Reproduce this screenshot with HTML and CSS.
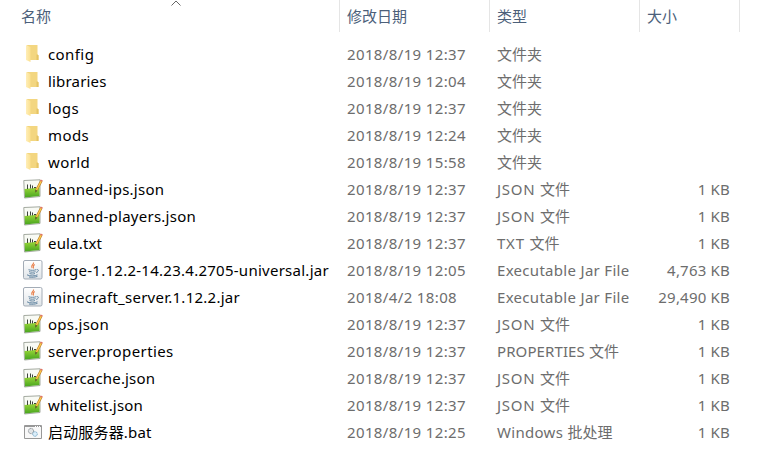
FILE: index.html
```html
<!DOCTYPE html>
<html lang="zh-CN">
<head>
<meta charset="utf-8">
<title>server</title>
<link rel="stylesheet" href="styles.css">
</head>
<body>
<svg class="sprite" width="0" height="0">
  <defs>
    <linearGradient id="gf" x1="0" x2="1"><stop offset="0" stop-color="#ffeeb8"/><stop offset="1" stop-color="#fbe08f"/></linearGradient>
    <linearGradient id="gg" x1="0" y1="0" x2="0" y2="1"><stop offset="0" stop-color="#9bd83a"/><stop offset="1" stop-color="#48a51f"/></linearGradient>
    <linearGradient id="gj" x1="0" y1="0" x2="0" y2="1"><stop offset="0" stop-color="#fff"/><stop offset="1" stop-color="#dfe4e8"/></linearGradient>
  </defs>
  <symbol id="folder" viewBox="0 0 20 20">
    <path fill="#f3d680" d="M4 1h10.500v9.500l1 1V16H6z"/>
    <path fill="#e5c364" d="M13.500 10.500h1l1 1V16h-2z"/>
    <path fill="url(#gf)" d="M3 1l4.500 2v15L3 16z"/>
  </symbol>
  <symbol id="note" viewBox="0 0 20 20">
    <path fill="#f8faf4" stroke="#a4aaa0" d="M.8 1.500L17 .8v16.700L1.500 19z"/>
    <path fill="url(#gg)" d="M1.500 10l15-1.500V17L2 18.500z"/>
    <path fill="none" stroke="#3f463c" d="M4.500 10V5.500M7.500 9.500v-4M9.500 9.500v-3M11 8.500h2"/>
    <path fill="none" stroke="#b27a24" stroke-width="2.600" d="M18.300 2l-4.800 9"/>
    <path fill="none" stroke="#ffc84d" stroke-width="1.500" d="M18.300 2l-4.800 9"/>
    <path fill="none" stroke="#df7465" stroke-width="2.400" d="M18.800 1l-.7 1.300"/>
    <path fill="#5e4a2b" d="M12.300 10.800l2 1-2 2z"/>
  </symbol>
  <symbol id="jar" viewBox="0 0 20 20">
    <rect x=".5" y=".5" width="18.500" height="18.500" rx="1.500" fill="url(#gj)" stroke="#a3acb6"/>
    <path fill="none" stroke="#e98350" stroke-width="1.200" d="M10.500 2.500c.8 2-3.500 3-1.500 5.500M11.800 4.500c-2.500 1.300-1 2-1.500 4"/>
    <path fill="none" stroke="#6688a3" d="M5.500 9.700c2 .8 6 .8 7.500 0M6 11.600c2 .8 5 .8 6.500 0M6.500 13.500c2 .7 4 .7 5.500 0M13.500 9.700c2.800-.8 2.300 2-.3 2.800M4 14.800c2 1.500 8.500 1.500 10.500 0M6 17c3 .5 6 .3 8.500-.7"/>
  </symbol>
  <symbol id="bat" viewBox="0 0 20 20">
    <path fill="#f8f8f8" stroke="#989898" d="M1.500 3.500h17v13h-17z"/>
    <path stroke="#989898" d="M2 4.500h16"/>
    <path stroke="#fff" stroke-dasharray="1 1" d="M12 4.500h6"/>
    <circle cx="8" cy="9" r="2.600" fill="#e2e5e7" stroke="#858b90" stroke-dasharray="1.300 .5"/>
    <circle cx="12" cy="12" r="2.300" fill="#dceefa" stroke="#77accb" stroke-dasharray="1.300 .5"/>
  </symbol>
</svg>
<main class="files">
  <header class="head">
    <div class="th">名称<svg class="sort" viewBox="0 0 10 6"><path d="M.5 5.500L5 1l4.500 4.500"/></svg></div>
    <div class="th">修改日期</div><div class="th">类型</div><div class="th">大小</div>
  </header>
  <div class="list">
    <div class="row"><svg class="icon"><use href="#folder"/></svg><span class="name loose">config</span><span class="date">2018/8/19 12:37</span><span class="type">文件夹</span><span class="size"></span></div>
    <div class="row"><svg class="icon"><use href="#folder"/></svg><span class="name tight">libraries</span><span class="date">2018/8/19 12:04</span><span class="type">文件夹</span><span class="size"></span></div>
    <div class="row"><svg class="icon"><use href="#folder"/></svg><span class="name loose">logs</span><span class="date">2018/8/19 12:37</span><span class="type">文件夹</span><span class="size"></span></div>
    <div class="row"><svg class="icon"><use href="#folder"/></svg><span class="name loose">mods</span><span class="date">2018/8/19 12:24</span><span class="type">文件夹</span><span class="size"></span></div>
    <div class="row"><svg class="icon"><use href="#folder"/></svg><span class="name loose">world</span><span class="date">2018/8/19 15:58</span><span class="type">文件夹</span><span class="size"></span></div>
    <div class="row"><svg class="icon"><use href="#note"/></svg><span class="name">banned-ips.json</span><span class="date">2018/8/19 12:37</span><span class="type"><span class="la caps">JSON </span>文件</span><span class="size">1 KB</span></div>
    <div class="row"><svg class="icon"><use href="#note"/></svg><span class="name">banned-players.json</span><span class="date">2018/8/19 12:37</span><span class="type"><span class="la caps">JSON </span>文件</span><span class="size">1 KB</span></div>
    <div class="row"><svg class="icon"><use href="#note"/></svg><span class="name tight">eula.txt</span><span class="date">2018/8/19 12:37</span><span class="type"><span class="la caps">TXT </span>文件</span><span class="size">1 KB</span></div>
    <div class="row"><svg class="icon"><use href="#jar"/></svg><span class="name">forge-1.12.2-14.23.4.2705-universal.jar</span><span class="date">2018/8/19 12:05</span><span class="type"><span class="la">Executable Jar File</span></span><span class="size">4,763 KB</span></div>
    <div class="row"><svg class="icon"><use href="#jar"/></svg><span class="name">minecraft_server.1.12.2.jar</span><span class="date">2018/4/2 18:08</span><span class="type"><span class="la">Executable Jar File</span></span><span class="size">29,490 KB</span></div>
    <div class="row"><svg class="icon"><use href="#note"/></svg><span class="name">ops.json</span><span class="date">2018/8/19 12:37</span><span class="type"><span class="la caps">JSON </span>文件</span><span class="size">1 KB</span></div>
    <div class="row"><svg class="icon"><use href="#note"/></svg><span class="name loose">server.properties</span><span class="date">2018/8/19 12:37</span><span class="type"><span class="la long">PROPERTIES </span>文件</span><span class="size">1 KB</span></div>
    <div class="row"><svg class="icon"><use href="#note"/></svg><span class="name tight">usercache.json</span><span class="date">2018/8/19 12:37</span><span class="type"><span class="la caps">JSON </span>文件</span><span class="size">1 KB</span></div>
    <div class="row"><svg class="icon"><use href="#note"/></svg><span class="name tight">whitelist.json</span><span class="date">2018/8/19 12:37</span><span class="type"><span class="la caps">JSON </span>文件</span><span class="size">1 KB</span></div>
    <div class="row"><svg class="icon"><use href="#bat"/></svg><span class="name tight">启动服务器.bat</span><span class="date">2018/8/19 12:25</span><span class="type"><span class="la">Windows </span>批处理</span><span class="size">1 KB</span></div>
  </div>
</main>
</body>
</html>
```
FILE: styles.css
```css
* { box-sizing: border-box; }
body { margin: 0; background: #fff; font: 15px/27px "Noto Sans", "Noto Sans CJK SC", sans-serif; color: #6d6d6d; overflow: hidden; }
.sprite { position: absolute; }
.files { width: 759px; height: 463px; }
.head { display: grid; grid-template-columns: 340px 150px 150px 100px; height: 32px; color: #4c607a; }
.th { position: relative; padding: 3px 0 0 7px; border-right: 1px solid #e5e5e5; }
.th:first-child { padding-left: 21px; }
.sort { position: absolute; left: 171px; top: 0; width: 10px; height: 6px; fill: none; stroke: #666; }
.list { padding-top: 9px; }
.row { display: grid; grid-template-columns: 25px 299px 150px 130px 103px; align-items: center; height: 27px; margin-left: 23px; white-space: nowrap; }
.icon { width: 20px; height: 20px; margin-top: -1px; }
.name { color: #000; letter-spacing: .26px; }
.loose { letter-spacing: .41px; }
.tight { letter-spacing: .17px; }
.date { letter-spacing: .37px; }
.la { letter-spacing: .3px; }
.caps { letter-spacing: .75px; }
.long { letter-spacing: .1px; }
.size { text-align: right; letter-spacing: .2px; }
```
